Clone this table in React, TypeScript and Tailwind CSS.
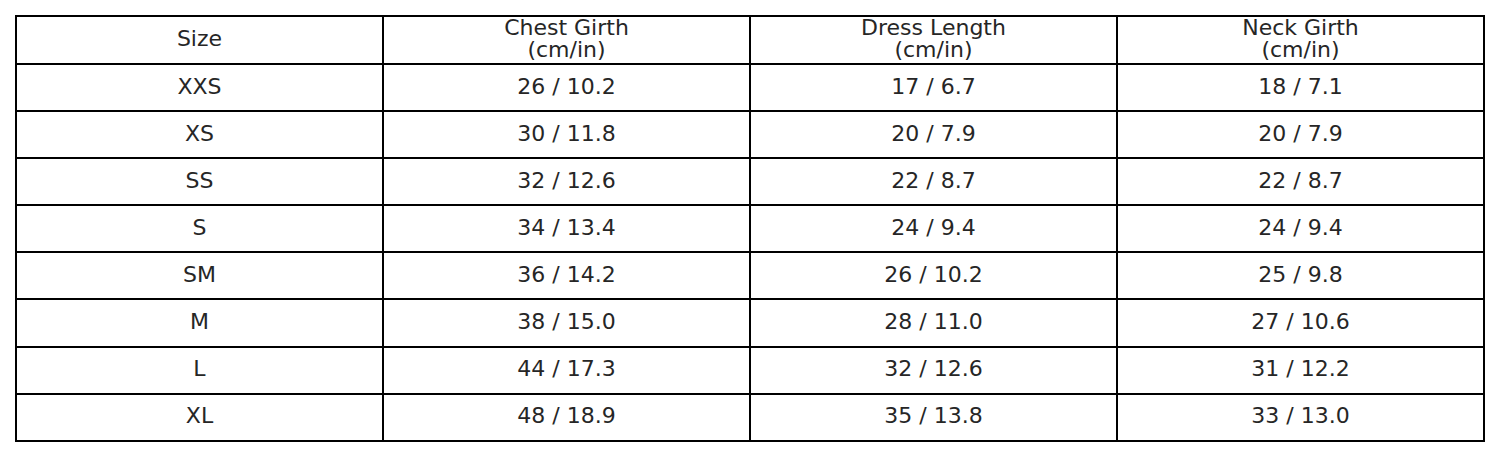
const headers = [
  ['Size'],
  ['Chest Girth', '(cm/in)'],
  ['Dress Length', '(cm/in)'],
  ['Neck Girth', '(cm/in)'],
]

const rows = [
  ['XXS', '26 / 10.2', '17 / 6.7', '18 / 7.1'],
  ['XS', '30 / 11.8', '20 / 7.9', '20 / 7.9'],
  ['SS', '32 / 12.6', '22 / 8.7', '22 / 8.7'],
  ['S', '34 / 13.4', '24 / 9.4', '24 / 9.4'],
  ['SM', '36 / 14.2', '26 / 10.2', '25 / 9.8'],
  ['M', '38 / 15.0', '28 / 11.0', '27 / 10.6'],
  ['L', '44 / 17.3', '32 / 12.6', '31 / 12.2'],
  ['XL', '48 / 18.9', '35 / 13.8', '33 / 13.0'],
]

export default function App() {
  return (
    <div className="w-[1500px] h-[457px] bg-white pt-[15px] pl-[15px]">
      <table
        className="w-[1470px] border-collapse table-fixed text-[#262626] text-[22px]"
        style={{ fontFamily: '"DejaVu Sans", sans-serif' }}
      >
        <thead>
          <tr className="h-[47.1px]">
            {headers.map((h, i) => (
              <th key={i} className="border-2 border-black font-normal text-center align-middle px-0 pt-0 pb-[2px] leading-[22px]">
                {h.map((line, j) => (
                  <div key={j}>{line}</div>
                ))}
              </th>
            ))}
          </tr>
        </thead>
        <tbody>
          {rows.map((r, i) => (
            <tr key={i} className="h-[47.1px]">
              {r.map((c, j) => (
                <td key={j} className="border-2 border-black text-center align-middle px-0 pt-0 pb-[2px] leading-none">
                  {c}
                </td>
              ))}
            </tr>
          ))}
        </tbody>
      </table>
    </div>
  )
}
